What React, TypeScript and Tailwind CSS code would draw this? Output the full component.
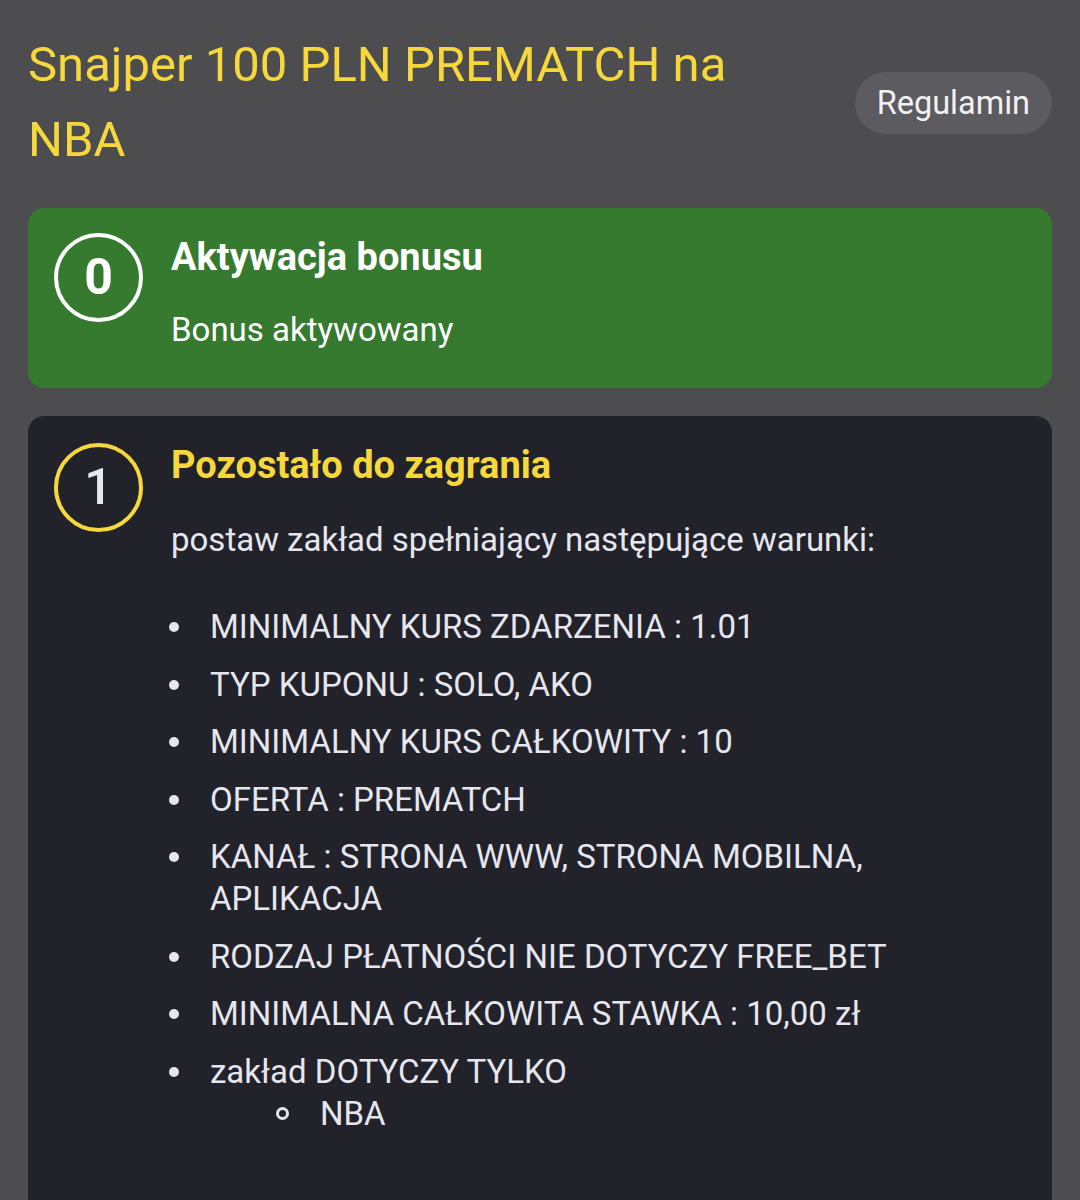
export default function App() {
  const items: { text: string; sub?: string[] }[] = [
    { text: "MINIMALNY KURS ZDARZENIA : 1.01" },
    { text: "TYP KUPONU : SOLO, AKO" },
    { text: "MINIMALNY KURS CAŁKOWITY : 10" },
    { text: "OFERTA : PREMATCH" },
    { text: "KANAŁ : STRONA WWW, STRONA MOBILNA, APLIKACJA" },
    { text: "RODZAJ PŁATNOŚCI NIE DOTYCZY FREE_BET" },
    { text: "MINIMALNA CAŁKOWITA STAWKA : 10,00 zł" },
    { text: "zakład DOTYCZY TYLKO", sub: ["NBA"] },
  ];

  return (
    <div
      className="w-[1080px] h-[1200px] overflow-hidden bg-[#4d4d50] px-[28px]"
      style={{ fontFamily: "Roboto, 'Noto Sans', sans-serif" }}
    >
      <div className="flex items-center justify-between pt-[27px]">
        <h1 className="w-[740px] text-[49px] leading-[75px] text-[#f6d83c]">
          Snajper 100 PLN PREMATCH na NBA
        </h1>
        <button className="mt-[2px] h-[62px] rounded-full bg-[#5b5b60] px-[22px] text-[32.5px] text-[#f1f1f4]">
          Regulamin
        </button>
      </div>

      <div className="mt-[31px] flex gap-[28px] rounded-[16px] bg-[#367a2f] px-[26px] pt-[25px] pb-[38px]">
        <div className="flex h-[89px] w-[89px] shrink-0 items-center justify-center rounded-full border-[4px] border-white text-[50px] font-bold text-white">
          0
        </div>
        <div className="pt-[2px]">
          <div className="text-[38px] font-bold leading-[44px] text-white">Aktywacja bonusu</div>
          <div className="mt-[31px] text-[33px] leading-[40px] text-white">Bonus aktywowany</div>
        </div>
      </div>

      <div className="mt-[28px] flex min-h-[800px] gap-[28px] rounded-t-[16px] bg-[#22222a] px-[26px] pt-[27px]">
        <div className="flex h-[89px] w-[89px] shrink-0 items-center justify-center rounded-full border-[4px] border-[#f6d83c] text-[50px] font-medium text-[#e6e6ee]">
          1
        </div>
        <div className="text-[#e6e6ee]">
          <div className="text-[38px] font-bold leading-[44px] text-[#f6d83c]">Pozostało do zagrania</div>
          <div className="mt-[33px] text-[33px] leading-[40px]">postaw zakład spełniający następujące warunki:</div>
          <ul className="mt-[46px] -ml-[2px] text-[33px] leading-[42px]">
            {items.map((it) => (
              <li key={it.text} className="mb-[15.5px] flex">
                <div className="flex h-[42px] w-[41px] shrink-0 items-center">
                  <span className="h-[10px] w-[10px] rounded-full bg-[#e6e6ee]" />
                </div>
                <div className="w-[680px]">
                  {it.text}
                  {it.sub && (
                    <ul className="ml-[66px]">
                      {it.sub.map((s) => (
                        <li key={s} className="flex">
                          <div className="flex h-[42px] w-[44px] shrink-0 items-center">
                            <span className="h-[13px] w-[13px] rounded-full border-[3px] border-[#e6e6ee]" />
                          </div>
                          {s}
                        </li>
                      ))}
                    </ul>
                  )}
                </div>
              </li>
            ))}
          </ul>
        </div>
      </div>
    </div>
  );
}
